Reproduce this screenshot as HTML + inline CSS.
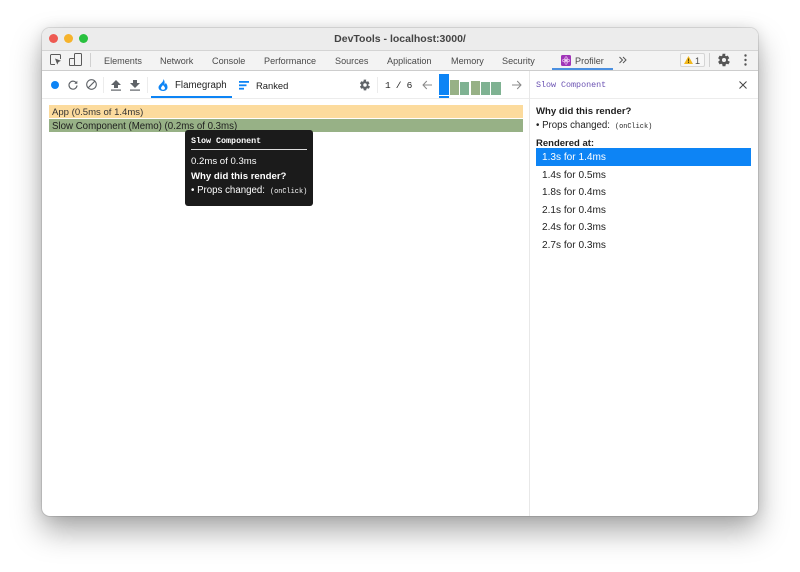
<!DOCTYPE html>
<html><head><meta charset="utf-8">
<style>
html,body{margin:0;padding:0;background:#fff;width:800px;height:572px;overflow:hidden}
body{font-family:"Liberation Sans",sans-serif;position:relative}
.a{position:absolute;white-space:nowrap}
.win{position:absolute;left:42px;top:28px;width:716px;height:488px;background:#fff;border-radius:8px;box-shadow:0 0 0 1px rgba(0,0,0,.1),0 15px 30px rgba(0,0,0,.34),0 0 14px rgba(0,0,0,.1)}
.tab{position:absolute;top:54.500px;font-size:9.100px;line-height:12px;color:#4a4a4a;white-space:nowrap}
.m{font-family:"Liberation Mono",monospace}
.row{position:absolute;left:542px;font-size:10.100px;line-height:12px;color:#222;white-space:nowrap}
svg{position:absolute;overflow:visible}
</style></head><body>
<div class="win"></div>
<div class="a" style="left:42px;top:28px;width:716px;height:22px;background:#ececec;border-radius:8px 8px 0 0;border-bottom:1px solid #d4d4d4"></div>
<div class="a" style="left:42px;top:51px;width:716px;height:19px;background:#f3f3f3;border-bottom:1px solid #cdcdcd"></div>
<div class="a" style="left:42px;top:98px;width:716px;height:1px;background:#ececec"></div>
<div class="a" style="left:529px;top:71px;width:1px;height:445px;background:#e8e8e8"></div>

<div class="a" style="left:49px;top:34px;width:9px;height:9px;border-radius:50%;background:#ee5a52"></div>
<div class="a" style="left:64px;top:34px;width:9px;height:9px;border-radius:50%;background:#f6b32c"></div>
<div class="a" style="left:79px;top:34px;width:9px;height:9px;border-radius:50%;background:#29c13f"></div>
<div class="a" style="left:42px;top:32px;width:716px;text-align:center;font-size:10.500px;line-height:14px;font-weight:bold;color:#444">DevTools - localhost:3000/</div>

<svg style="left:50px;top:54px" width="12" height="12" fill="none" stroke="#5a5a5a"><path d="M5 10.500H1.500a1 1 0 0 1-1-1V1.500a1 1 0 0 1 1-1h8a1 1 0 0 1 1 1V5"/><path d="M5 4.500l6 2.300-2.500 1.200L7.300 10.600z" fill="#5a5a5a" stroke="none"/></svg>
<svg style="left:69px;top:53px" width="13" height="14" fill="none" stroke="#5a5a5a"><rect x="5.500" y=".5" width="7" height="12" rx="1"/><rect x=".5" y="5.500" width="5" height="7" rx=".8" fill="#f3f3f3"/></svg>
<div class="a" style="left:90px;top:53px;width:1px;height:14px;background:#d0d0d0"></div>

<div class="tab" style="left:104px">Elements</div>
<div class="tab" style="left:160px">Network</div>
<div class="tab" style="left:212px">Console</div>
<div class="tab" style="left:264px">Performance</div>
<div class="tab" style="left:335px">Sources</div>
<div class="tab" style="left:387px">Application</div>
<div class="tab" style="left:451px">Memory</div>
<div class="tab" style="left:502px">Security</div>
<svg style="left:561px;top:55px" width="10" height="11"><rect width="10" height="11" rx="1.500" fill="#a034b8"/><circle cx="5" cy="5.500" r="1.200" fill="#f3d8f7"/><ellipse cx="5" cy="5.500" rx="3.800" ry="1.500" fill="none" stroke="#f3d8f7" stroke-width=".6"/><ellipse cx="5" cy="5.500" rx="1.500" ry="3.800" fill="none" stroke="#f3d8f7" stroke-width=".6"/></svg>
<div class="tab" style="left:575px">Profiler</div>
<div class="a" style="left:552px;top:68px;width:61px;height:2px;background:#4a8fe0"></div>
<svg style="left:619px;top:56px" width="8" height="8" fill="none" stroke="#555"><path d="M.5 1l3 3-3 3M4 1l3 3-3 3"/></svg>

<div class="a" style="left:680px;top:53px;width:23px;height:12px;border:1px solid #d5d5d5;border-radius:2px;background:#f7f7f7"></div>
<svg style="left:684px;top:56px" width="9" height="8"><path d="M4.500 0L9 8H0z" fill="#f2b81d"/><rect x="4" y="2.500" width="1" height="3" fill="#5a4500"/><rect x="4" y="6" width="1" height="1" fill="#5a4500"/></svg>
<div class="tab" style="left:695px">1</div>
<div class="a" style="left:709px;top:53px;width:1px;height:14px;background:#d0d0d0"></div>
<svg style="left:717px;top:53px" width="14" height="14" viewBox="1 0 24 24"><path fill="#555" d="M19.400 13c.1-.3.1-.7.100-1s0-.7-.1-1l2.600-2-2.500-4.500-3 1.100c-.5-.4-1.100-.7-1.700-1L15.500 1.300h-5l-.4 3.300c-.6.300-1.200.6-1.700 1l-3-1.100L2.900 9l2.600 2c-.1.300-.1.700-.1 1s0 .7.1 1l-2.600 2 2.500 4.500 3-1.100c.5.400 1.100.7 1.700 1l.4 3.300h5l.4-3.300c.6-.3 1.200-.6 1.700-1l3 1.100 2.500-4.500zM13 15.500a3.500 3.500 0 1 1 0-7 3.500 3.500 0 0 1 0 7z"/></svg>
<svg style="left:744px;top:54px" width="3" height="12" fill="#555"><circle cx="1.500" cy="1.500" r="1.200"/><circle cx="1.500" cy="6" r="1.200"/><circle cx="1.500" cy="10.500" r="1.200"/></svg>

<div class="a" style="left:51px;top:81px;width:8px;height:8px;border-radius:50%;background:#0d84f5"></div>
<svg style="left:68px;top:80px" width="10" height="10" fill="none" stroke="#5f6368" stroke-width="1.200"><path d="M8.500 3.200A4 4 0 1 0 9 5.500"/><path d="M9.300.8v3H6.300" fill="#5f6368" stroke="none"/></svg>
<svg style="left:86px;top:79px" width="11" height="11" fill="none" stroke="#5f6368" stroke-width="1.100"><circle cx="5.500" cy="5.500" r="4.800"/><path d="M2.200 8.800L8.800 2.200"/></svg>
<div class="a" style="left:103px;top:77px;width:1px;height:16px;background:#ececec"></div>
<svg style="left:111px;top:80px" width="10" height="11" fill="#5f6368"><path d="M5 0L10 5H7v3H3V5H0z"/><rect y="9.500" width="10" height="1.200"/></svg>
<svg style="left:130px;top:80px" width="10" height="11" fill="#5f6368"><path d="M5 8L10 3H7V0H3v3H0z"/><rect y="9.500" width="10" height="1.200"/></svg>
<div class="a" style="left:147px;top:77px;width:1px;height:16px;background:#ececec"></div>

<svg style="left:158px;top:79px" width="10" height="12"><path fill="#0d84f5" d="M5.300 0c.4 2-1 3-2.300 4.500C1.800 5.800.5 6.800.500 8.400.5 10.500 2.500 12 5 12s4.500-1.500 4.500-3.800c0-2-1-3.400-1.800-4.400-.2 1-.6 1.500-1.200 1.800C6.800 3.600 6.700 1.500 5.300 0zM5 10.800c-1.100 0-2-.7-2-1.700 0-1.100 1.200-1.700 2-3.100.8 1.400 2 2 2 3.100 0 1-.9 1.700-2 1.700z"/></svg>
<div class="a" style="left:175px;top:79.800px;font-size:9.700px;line-height:12px;color:#222">Flamegraph</div>
<div class="a" style="left:151px;top:96px;width:81px;height:2px;background:#0d84f5"></div>
<svg style="left:239px;top:81px" width="10" height="9" fill="#0d84f5"><rect width="10" height="1.800"/><rect y="3.400" width="7.500" height="1.800"/><rect y="6.800" width="5" height="1.800"/></svg>
<div class="a" style="left:256px;top:79.500px;font-size:9.400px;line-height:12px;color:#222">Ranked</div>

<svg style="left:359px;top:79px" width="12" height="12" viewBox="1 0 24 24"><path fill="#5f6368" d="M19.400 13c.1-.3.1-.7.100-1s0-.7-.1-1l2.600-2-2.500-4.500-3 1.100c-.5-.4-1.100-.7-1.700-1L15.500 1.300h-5l-.4 3.300c-.6.300-1.200.6-1.700 1l-3-1.100L2.900 9l2.600 2c-.1.300-.1.700-.1 1s0 .7.1 1l-2.600 2 2.500 4.500 3-1.100c.5.400 1.100.7 1.700 1l.4 3.300h5l.4-3.300c.6-.3 1.200-.6 1.700-1l3 1.100 2.500-4.500zM13 15.500a3.500 3.500 0 1 1 0-7 3.500 3.500 0 0 1 0 7z"/></svg>
<div class="a" style="left:377px;top:77px;width:1px;height:16px;background:#ececec"></div>
<div class="a m" style="left:385px;top:79.500px;font-size:9.500px;line-height:12px;color:#222;letter-spacing:.2px;word-spacing:-1px">1 / 6</div>
<svg style="left:422px;top:80px" width="10" height="10" fill="none" stroke="#888" stroke-width="1"><path d="M10 5H1M4.800 1L1 5l3.800 4"/></svg>
<div class="a" style="left:439px;top:74px;width:10px;height:21px;background:#0d84f5"></div>
<div class="a" style="left:439px;top:96px;width:10px;height:2px;background:#0d84f5"></div>
<div class="a" style="left:450px;top:80px;width:9px;height:15px;background:#97b186"></div>
<div class="a" style="left:460px;top:82px;width:9px;height:13px;background:#7fb292"></div>
<div class="a" style="left:471px;top:81px;width:9px;height:14px;background:#97b186"></div>
<div class="a" style="left:481px;top:82px;width:9px;height:13px;background:#7fb292"></div>
<div class="a" style="left:491px;top:82px;width:10px;height:13px;background:#7fb292"></div>
<svg style="left:512px;top:80px" width="10" height="10" fill="none" stroke="#888" stroke-width="1"><path d="M0 5h9M5.200 1L9 5 5.200 9"/></svg>

<div class="a m" style="left:536px;top:79px;font-size:8.350px;line-height:12px;color:#6a51b2">Slow Component</div>
<svg style="left:739px;top:81px" width="8" height="8" fill="none" stroke="#444" stroke-width="1"><path d="M.5.500l7 7M7.500.500l-7 7"/></svg>

<div class="a" style="left:49px;top:105px;width:474px;height:13px;background:#fcdb9d"></div>
<div class="a" style="left:52px;top:106px;font-size:9.550px;line-height:13px;color:#333">App (0.5ms of 1.4ms)</div>
<div class="a" style="left:49px;top:119px;width:474px;height:13px;background:#97b186"></div>
<div class="a" style="left:52px;top:120px;font-size:9.700px;line-height:13px;color:#1e1e1e">Slow Component (Memo) (0.2ms of 0.3ms)</div>

<div class="a" style="left:185px;top:130px;width:128px;height:76px;background:#1b1b1b;border-radius:3px"></div>
<div class="a m" style="left:191px;top:135px;font-size:8.350px;line-height:12px;font-weight:bold;color:#fff">Slow Component</div>
<div class="a" style="left:191px;top:149px;width:116px;height:1px;background:#ddd"></div>
<div class="a" style="left:191px;top:156px;font-size:9.600px;line-height:12px;color:#fff">0.2ms of 0.3ms</div>
<div class="a" style="left:191px;top:171px;font-size:9.600px;line-height:12px;font-weight:bold;color:#fff">Why did this render?</div>
<div class="a" style="left:191px;top:185px;font-size:9.700px;line-height:12px;color:#fff">• Props changed:</div>
<div class="a m" style="left:270px;top:185.500px;font-size:6.900px;line-height:12px;color:#fff">(onClick)</div>

<div class="a" style="left:536px;top:105px;font-size:9.600px;line-height:13px;font-weight:bold;color:#1e1e1e">Why did this render?</div>
<div class="a" style="left:536px;top:120px;font-size:9.700px;line-height:12px;color:#222">• Props changed:</div>
<div class="a m" style="left:615px;top:120.500px;font-size:6.900px;line-height:12px;color:#222">(onClick)</div>
<div class="a" style="left:536px;top:137.500px;font-size:9.500px;line-height:12px;font-weight:bold;color:#1e1e1e">Rendered at:</div>
<div class="a" style="left:536px;top:148px;width:215px;height:18px;background:#0d84f5"></div>
<div class="row" style="top:152px;color:#fff">1.3s for 1.4ms</div>
<div class="row" style="top:170px">1.4s for 0.5ms</div>
<div class="row" style="top:187px">1.8s for 0.4ms</div>
<div class="row" style="top:205px">2.1s for 0.4ms</div>
<div class="row" style="top:222px">2.4s for 0.3ms</div>
<div class="row" style="top:240px">2.7s for 0.3ms</div>
</body></html>
